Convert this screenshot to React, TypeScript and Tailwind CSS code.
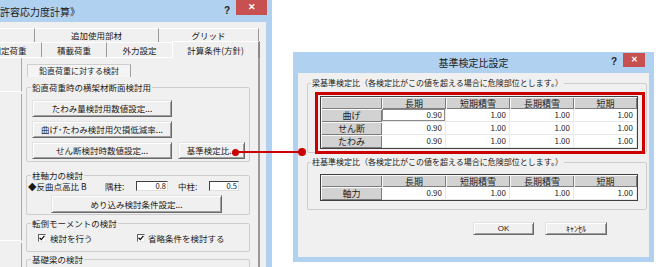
import type { ReactNode } from "react";

const jp = "font-['Noto_Sans_CJK_JP','Liberation_Sans',sans-serif]";

function Btn({ className, children }: { className?: string; children?: ReactNode }) {
  return (
    <div
      className={`flex items-center justify-center bg-[#f0f0f0] border border-t-[#e3e3e3] border-l-[#e3e3e3] border-r-[#696969] border-b-[#696969] shadow-[inset_1px_1px_0_#ffffff,inset_-1px_-1px_0_#a0a0a0] leading-none text-[#1a1a1a] ${className ?? ""}`}
    >
      {children}
    </div>
  );
}

function Group({ label, className, children }: { label: string; className?: string; children?: ReactNode }) {
  return (
    <fieldset className={`border border-[#cdcdcd] rounded-[2px] ${className ?? ""}`}>
      <legend className="px-[1px] leading-[10px] text-[#1a1a1a]">{label}</legend>
      {children}
    </fieldset>
  );
}

function Check() {
  return (
    <div className="w-[8px] h-[8px] shrink-0 bg-white border border-t-[#606060] border-l-[#606060] border-r-[#e8e8e8] border-b-[#e8e8e8] flex items-center justify-center">
      <svg width="6" height="6" viewBox="0 0 6 6">
        <path d="M0.6 2.8 L2.3 4.6 L5.4 0.9" stroke="#111" strokeWidth="1.3" fill="none" />
      </svg>
    </div>
  );
}

function NumBox({ value, className }: { value: string; className?: string }) {
  return (
    <div
      className={`h-[10px] bg-white border border-t-[#404040] border-l-[#404040] border-r-[#e0e0e0] border-b-[#e0e0e0] text-[7.5px] leading-[8px] text-right pr-[1px] text-[#111] ${className ?? ""}`}
    >
      {value}
    </div>
  );
}

const head = "bg-[#d2d2d2] shadow-[inset_1px_1px_0_#f8f8f8,inset_-1px_-1px_0_#7c7c7c] flex items-center justify-center text-[9px] leading-none text-[#222]";
const cell = "h-[13px] bg-white border-r border-b border-[#e8e8e8] flex items-center justify-end pr-[3px] text-[8px] leading-none text-[#222]";

function RatioTable({ rows }: { rows: { name: string; values: string[] }[] }) {
  const cols = ["", "長期", "短期積雪", "長期積雪", "短期"];
  return (
    <div className="w-[318px] border border-[#404040] grid grid-cols-[61px_64px_64px_64px_63px]">
      {cols.map((c, i) => (
        <div key={i} className={`h-[12px] ${head}`}>
          {c}
        </div>
      ))}
      {rows.map((r, ri) => (
        <div key={r.name} className="contents">
          <div className={`h-[13px] ${head}`}>{r.name}</div>
          {r.values.map((v, vi) => (
            <div
              key={vi}
              className={`${cell} ${ri === 0 && vi === 0 && rows.length > 1 ? "shadow-[inset_0_0_0_1px_#8a8a8a]" : ""}`}
            >
              {v}
            </div>
          ))}
        </div>
      ))}
    </div>
  );
}

function LeftWindow() {
  return (
    <div className="absolute left-[-80px] top-0 w-[352px] h-[300px] bg-[#b1d1f1] flex flex-col">
      <div className="h-[22px] shrink-0 flex items-start">
        <div className="pl-[70px] pt-[6px] text-[10px] leading-[12px] text-[#1a1a1a]">《許容応力度計算》</div>
        <div className="ml-auto mr-[5px] flex items-start">
          <span className="mt-[6px] mr-[6px] text-[10px] leading-[10px] font-bold text-[#222] font-['Liberation_Sans',sans-serif]">?</span>
          <div className="w-[31px] h-[15px] bg-[#c75050] flex items-center justify-center text-white text-[9px] leading-none font-bold font-['Liberation_Sans',sans-serif]">
            ✕
          </div>
        </div>
      </div>
      <div className="mx-[6px] flex-1 bg-[#f0f0f0] flex flex-col pt-[6px] pl-[4px]">
        {/* tab rows */}
        <div className="flex h-[14px] text-[8.5px] leading-none text-[#1a1a1a]">
          <div className="w-[105px] border-t border-l border-t-white border-l-white border-r border-r-[#9a9a9a]" />
          <div className="w-[124px] flex items-center justify-center border-t border-t-white border-r border-r-[#9a9a9a]">追加使用部材</div>
          <div className="w-[100px] flex items-center justify-center border-t border-t-white border-r border-r-[#9a9a9a]">グリッド</div>
        </div>
        <div className="flex h-[15px] text-[8.5px] leading-none text-[#1a1a1a]">
          <div className="w-[48px] border-t border-t-white border-r border-r-[#9a9a9a]" />
          <div className="w-[64px] flex items-center justify-center border-t border-t-white border-r border-r-[#9a9a9a]">固定荷重</div>
          <div className="w-[65px] flex items-center justify-center border-t border-t-white border-r border-r-[#9a9a9a]">積載荷重</div>
          <div className="w-[65px] flex items-center justify-center border-t border-t-white">外力設定</div>
          <div className="relative z-10 w-[88px] h-[17px] -mt-[1px] bg-[#f0f0f0] flex items-center justify-center border-t border-l border-t-white border-l-white border-r-2 border-r-[#8a8a8a] text-[8.5px]">
            計算条件(方針)
          </div>
        </div>
        {/* tab panel */}
        <div className="w-[330px] flex-1 border-t border-t-white border-r-2 border-r-[#9a9a9a] flex text-[8.5px]">
          <div className="w-[92px] flex flex-col">
            <div className="h-[34px] border-r border-b border-r-[#a8a8a8] border-b-white" />
            <div className="mt-[2px] h-[147px] border-r border-b border-r-[#a8a8a8] border-b-white" />
            <div className="mt-[2px] flex-1 border-r border-r-[#a8a8a8]" />
          </div>
          <div className="flex-1 flex flex-col">
            <div className="ml-[5px] mt-[6px] w-[104px] h-[13px] bg-[#f4f4f4] border border-b-0 border-[#cfcfcf] border-r-[#a0a0a0] flex items-center justify-center leading-none text-[8px] text-[#1a1a1a]">
              鉛直荷重に対する検討
            </div>
            <Group label="鉛直荷重時の横架材断面検討用" className="ml-[4px] w-[224px] mt-[5px] pl-[4px] pb-[2px]">
              <div className="ml-[1px] mt-[8px] flex flex-col gap-[4px] text-[8.5px]">
                <Btn className="w-[140px] h-[17px]">たわみ量検討用数値設定...</Btn>
                <Btn className="w-[140px] h-[17px]">曲げ･たわみ検討用欠損低減率...</Btn>
                <div className="flex gap-[6px]">
                  <Btn className="w-[140px] h-[17px]">せん断検討時数値設定...</Btn>
                  <Btn className="w-[67px] h-[17px]">基準検定比...</Btn>
                </div>
              </div>
            </Group>
            <Group label="柱軸力の検討" className="ml-[4px] w-[224px] mt-[8px] pl-[4px] pb-[1px]">
              <div className="-ml-[3px] mt-[1px] h-[10px] flex items-center text-[8.5px] leading-none text-[#1a1a1a]">
                <span className="w-[77px]">◆反曲点高比 B</span>
                <span className="w-[31px]">隅柱:</span>
                <NumBox value="0.8" className="w-[32px]" />
                <span className="w-[10px]" />
                <span className="w-[31px]">中柱:</span>
                <NumBox value="0.5" className="w-[30px]" />
              </div>
              <Btn className="ml-[20px] mt-[4px] w-[171px] h-[18px] text-[8.5px]">めり込み検討条件設定...</Btn>
            </Group>
            <Group label="転倒モーメントの検討" className="ml-[4px] w-[224px] mt-[3px] pl-[4px] pb-[8px]">
              <div className="ml-[7px] mt-[5px] h-[10px] flex items-center text-[8.5px] leading-none text-[#1a1a1a]">
                <div className="w-[99px] flex items-center gap-[4px]">
                  <Check />
                  <span>検討を行う</span>
                </div>
                <div className="flex items-center gap-[3px]">
                  <Check />
                  <span>省略条件を検討する</span>
                </div>
              </div>
            </Group>
            <Group label="基礎梁の検討" className="ml-[4px] w-[224px] mt-[2px] pl-[4px] h-[40px]" />
          </div>
        </div>
      </div>
    </div>
  );
}

function Dialog() {
  return (
    <div className="absolute left-[293px] top-[52px] w-[361px] h-[210px] bg-[#b1d1f1] flex flex-col">
      <div className="h-[21px] shrink-0 grid grid-cols-[1fr_auto_1fr]">
        <div />
        <div className="pt-[5px] text-[10px] leading-[12px] text-[#1a1a1a]">基準検定比設定</div>
        <div className="flex justify-end items-start mr-[9px]">
          <span className="mt-[5px] mr-[6px] text-[10px] leading-[10px] font-bold text-[#222] font-['Liberation_Sans',sans-serif]">?</span>
          <div className="mt-[1px] w-[22px] h-[14px] bg-[#c75050] flex items-center justify-center text-white text-[8px] leading-none font-bold font-['Liberation_Sans',sans-serif]">
            ✕
          </div>
        </div>
      </div>
      <div className="mx-[5px] mb-[5px] flex-1 bg-[#f0f0f0] flex flex-col text-[8px]">
        <Group
          label="梁基準検定比（各検定比がこの値を超える場合に危険部位とします。）"
          className="ml-[9px] w-[340px] mt-[5px] pl-[3px] pb-[3px]"
        >
          <div className="ml-[9px] mt-[8px]">
            <RatioTable
              rows={[
                { name: "曲げ", values: ["0.90", "1.00", "1.00", "1.00"] },
                { name: "せん断", values: ["0.90", "1.00", "1.00", "1.00"] },
                { name: "たわみ", values: ["0.90", "1.00", "1.00", "1.00"] },
              ]}
            />
          </div>
        </Group>
        <Group
          label="柱基準検定比（各検定比がこの値を超える場合に危険部位とします。）"
          className="ml-[9px] w-[340px] mt-[4px] pl-[3px] pb-[8px]"
        >
          <div className="ml-[9px] mt-[7px]">
            <RatioTable rows={[{ name: "軸力", values: ["0.90", "1.00", "1.00", "1.00"] }]} />
          </div>
        </Group>
        <div className="ml-[175px] mt-[12px] flex gap-[11px] text-[8px]">
          <Btn className="w-[61px] h-[13px] font-['Liberation_Sans',sans-serif]">OK</Btn>
          <Btn className="w-[62px] h-[13px]">ｷｬﾝｾﾙ</Btn>
        </div>
      </div>
    </div>
  );
}

export default function App() {
  return (
    <div className={`relative w-[660px] h-[267px] overflow-hidden bg-white ${jp}`}>
      <LeftWindow />
      <Dialog />
      {/* annotation overlay */}
      <div className="absolute left-[315px] top-[92px] w-[330px] h-[62px] border-[3px] border-[#cc0000]" />
      <div className="absolute left-[236px] top-[151px] w-[64px] h-[2px] bg-[#cc0000]" />
      <div className="absolute left-[232px] top-[149px] w-[7px] h-[7px] rounded-full bg-[#cc0000]" />
      <div className="absolute left-[298px] top-[148px] w-[8px] h-[8px] rounded-full bg-[#cc0000]" />
    </div>
  );
}
